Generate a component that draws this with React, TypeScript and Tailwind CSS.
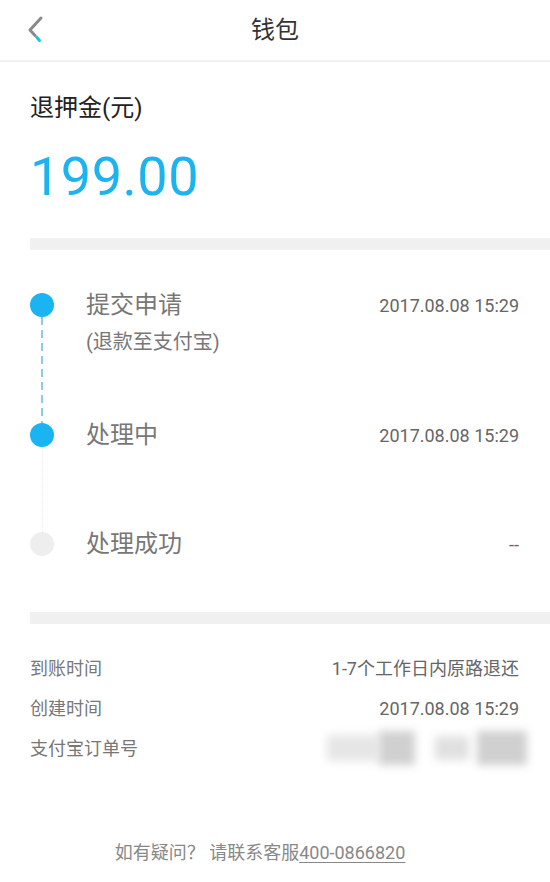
import React from "react";

const FONT = { fontFamily: "Roboto, 'Noto Sans CJK SC', 'Noto Sans', sans-serif" };

interface Step {
  title: string;
  sub?: string;
  time: string;
  done: boolean;
  height: string;
  line?: "dashed" | "faint";
}

const STEPS: Step[] = [
  { title: "提交申请", sub: "(退款至支付宝)", time: "2017.08.08 15:29", done: true, height: "h-[130px]", line: "dashed" },
  { title: "处理中", time: "2017.08.08 15:29", done: true, height: "h-[109px]", line: "faint" },
  { title: "处理成功", time: "--", done: false, height: "h-[24px]" },
];

function BackIcon() {
  return (
    <svg width="24" height="30" viewBox="0 0 24 30" fill="none">
      <path d="M15 3 L4 15 L9 20.5" stroke="#8a8a8a" strokeWidth="3" strokeLinecap="round" strokeLinejoin="round" />
      <path d="M10.5 22 L13.5 25.5" stroke="#1fc3e0" strokeWidth="3" strokeLinecap="round" />
    </svg>
  );
}

export default function App() {
  return (
    <div className="w-[550px] h-[882px] bg-white flex flex-col" style={FONT}>
      {/* header */}
      <div className="h-[62px] border-b-2 border-[#f2f2f2] flex items-center relative">
        <div className="absolute left-[26px] top-[15px]">
          <BackIcon />
        </div>
        <div className="flex-1 text-center text-[24px] text-[#333] leading-none">钱包</div>
      </div>

      {/* amount */}
      <div className="pl-[30px] pt-[31px]">
        <div className="text-[24px] leading-[30px] text-[#222]">退押金(元)</div>
        <div className="mt-[24px] text-[54px] leading-[60px] text-[#1cb4ef] tracking-[0.5px]">199.00</div>
      </div>
      <div className="ml-[30px] mt-[31px] h-[12px] bg-[#f0f0f0]" />

      {/* timeline */}
      <div className="pl-[30px] pr-[31px] pt-[43px] pb-[56px]">
        {STEPS.map((s) => (
          <div key={s.title} className={`flex ${s.height}`}>
            <div className="w-[24px] flex flex-col items-center">
              <div className={`w-[24px] h-[24px] rounded-full shrink-0 ${s.done ? "bg-[#19b4f1]" : "bg-[#eeeeee]"}`} />
              {s.line === "dashed" && (
                <div className="flex-1 w-[1.5px] bg-[repeating-linear-gradient(to_bottom,#8ccbe0_0px,#8ccbe0_8px,transparent_8px,transparent_13px)]" />
              )}
              {s.line === "faint" && <div className="flex-1 border-l border-dotted border-[#ececec]" />}
            </div>
            <div className="flex-1 pl-[32px]">
              <div className="flex items-center h-[24px]">
                <div className="flex-1 text-[24px] leading-[24px] text-[#777]">{s.title}</div>
                <div className="text-[18px] text-[#666]">{s.time}</div>
              </div>
              {s.sub && <div className="mt-[13px] text-[20px] leading-[24px] text-[#777]">{s.sub}</div>}
            </div>
          </div>
        ))}
      </div>
      <div className="ml-[30px] h-[12px] bg-[#f0f0f0]" />

      {/* info */}
      <div className="pl-[30px] pr-[31px] pt-[24px] text-[18px] text-[#777]">
        <div className="h-[40px] flex items-center justify-between">
          <span>到账时间</span>
          <span className="text-[#666]">1-7个工作日内原路退还</span>
        </div>
        <div className="h-[40px] flex items-center justify-between">
          <span>创建时间</span>
          <span className="text-[#666]">2017.08.08 15:29</span>
        </div>
        <div className="h-[40px] flex items-center justify-between">
          <span>支付宝订单号</span>
          <div className="flex items-center gap-[20px] mr-[-8px]">
            <div className="flex items-center">
              <div className="w-[52px] h-[26px] bg-[#e6e6e6] blur-[5px]" />
              <div className="w-[36px] h-[34px] bg-[#d0d0d0] blur-[4px]" />
            </div>
            <div className="flex items-center gap-[8px]">
              <div className="w-[34px] h-[24px] bg-[#e0e0e0] blur-[5px]" />
              <div className="w-[50px] h-[34px] bg-[#d0d0d0] blur-[4px]" />
            </div>
          </div>
        </div>
      </div>

      {/* footer */}
      <div className="mt-[71px] pr-[30px] text-center text-[18px] text-[#888]">
        如有疑问？ 请联系客服<span className="underline underline-offset-[3px]">400-0866820</span>
      </div>
    </div>
  );
}
